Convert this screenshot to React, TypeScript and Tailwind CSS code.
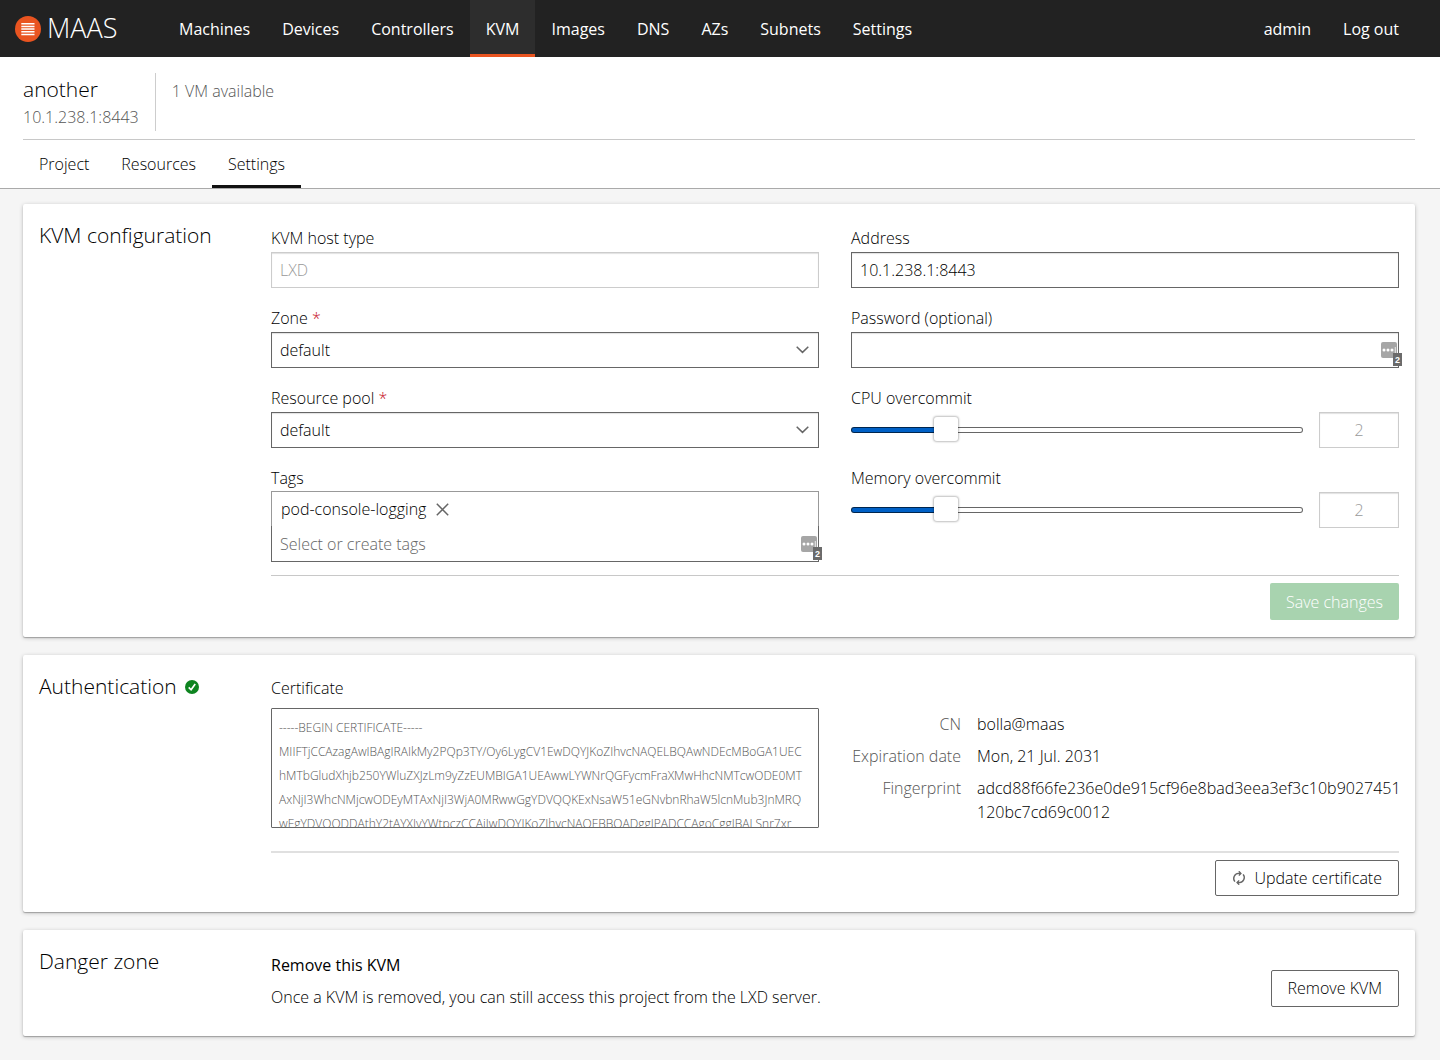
import React, { useId, useState } from 'react';

const navLinks = ['Machines', 'Devices', 'Controllers', 'KVM', 'Images', 'DNS', 'AZs', 'Subnets', 'Settings'];
const tabs = ['Project', 'Resources', 'Settings'];

const certificate = `-----BEGIN CERTIFICATE-----
MIIFTjCCAzagAwIBAgIRAIkMy2PQp3TY/Oy6LygCV1EwDQYJKoZIhvcNAQELBQAwNDEcMBoGA1UEC
hMTbGludXhjb250YWluZXJzLm9yZzEUMBIGA1UEAwwLYWNrQGFycmFraXMwHhcNMTcwODE0MT
AxNjI3WhcNMjcwODEyMTAxNjI3WjA0MRwwGgYDVQQKExNsaW51eGNvbnRhaW5lcnMub3JnMRQ
wEgYDVQQDDAthY2tAYXJyYWtpczCCAiIwDQYJKoZIhvcNAQEBBQADggIPADCCAgoCggIBALSnr7xr`;

const fieldClass =
  'block h-9 w-full rounded-none border border-[#666] bg-white px-2 text-black shadow-[inset_0_1px_1px_rgba(0,0,0,0.12)] outline-none disabled:border-[#ccc] disabled:text-[#999]';

const Logo = () => (
  <svg width="26" height="26" viewBox="0 0 26 26" aria-hidden="true">
    <circle cx="13" cy="13" r="13" fill="#e95420" />
    <path d="M6.3 7.7h13.2M6.3 10.4h13.2M6.3 13.1h13.2M6.3 15.8h13.2M6.3 18.5h13.2" stroke="#fff" strokeWidth="1.5" />
  </svg>
);

const PasswordManagerBadge = () => (
  <svg className="pointer-events-none absolute -right-[3px] bottom-0 z-10" width="22" height="26" viewBox="0 0 22 26" aria-hidden="true">
    <rect x="1" y="0" width="16" height="16" rx="2" fill="#a6a6a6" />
    <circle cx="4" cy="8" r="1.5" fill="#fff" />
    <circle cx="8" cy="8" r="1.5" fill="#fff" />
    <circle cx="12" cy="8" r="1.5" fill="#fff" />
    <path d="M15.3 5v6" stroke="#fff" strokeWidth="0.8" />
    <rect x="13" y="11" width="9" height="13" fill="#6b6b6b" />
    <text x="17.5" y="21" fill="#fff" fontSize="9" fontWeight="700" textAnchor="middle" fontFamily="Liberation Sans, sans-serif">2</text>
  </svg>
);

interface FieldProps {
  label: string;
  required?: boolean;
  children: (id: string) => React.ReactNode;
}

const Field: React.FC<FieldProps> = ({ label, required, children }) => {
  const id = useId();
  return (
    <div className="h-20">
      <label htmlFor={id} className="mb-[2px] block leading-6">
        {label}
        {required && <span className="text-[#c7162b]"> *</span>}
      </label>
      {children(id)}
    </div>
  );
};

const SelectField: React.FC<{ label: string }> = ({ label }) => (
  <Field label={label} required>
    {(id) => (
      <div className="relative">
        <select id={id} className={`${fieldClass} appearance-none`} defaultValue="default">
          <option>default</option>
        </select>
        <svg className="pointer-events-none absolute top-[14px] right-[10px]" width="13" height="8" viewBox="0 0 13 8" fill="none" aria-hidden="true">
          <path d="M0.7 0.8 6.5 6.4 12.3 0.8" stroke="#666" strokeWidth="1.5" />
        </svg>
      </div>
    )}
  </Field>
);

const OvercommitField: React.FC<{ label: string }> = ({ label }) => {
  const [value, setValue] = useState(2);
  const fill = { '--fill': `${((value - 0.1) / 9.9) * 100}%` } as React.CSSProperties;
  return (
    <Field label={label}>
      {(id) => (
        <div className="flex items-center gap-4">
          <input
            id={id}
            type="range"
            min={0.1}
            max={10}
            step={0.1}
            value={value}
            onChange={(e) => setValue(Number(e.target.value))}
            style={fill}
            className="h-9 min-w-0 flex-1 appearance-none bg-transparent [&::-webkit-slider-runnable-track]:h-[6px] [&::-webkit-slider-runnable-track]:rounded-full [&::-webkit-slider-runnable-track]:border [&::-webkit-slider-runnable-track]:border-black/60 [&::-webkit-slider-runnable-track]:bg-[linear-gradient(to_right,#0060c6_var(--fill),#fff_var(--fill))] [&::-webkit-slider-runnable-track]:bg-origin-border [&::-webkit-slider-thumb]:-mt-[11px] [&::-webkit-slider-thumb]:size-6 [&::-webkit-slider-thumb]:appearance-none [&::-webkit-slider-thumb]:rounded-[3px] [&::-webkit-slider-thumb]:bg-white [&::-webkit-slider-thumb]:shadow-[0_0_2px_1px_rgba(0,0,0,0.25)]"
          />
          <div className="w-20">
            <input aria-label={`${label} value`} disabled value={value} readOnly className={`${fieldClass} text-center`} />
          </div>
        </div>
      )}
    </Field>
  );
};

const Card: React.FC<{ title: React.ReactNode; className?: string; children: React.ReactNode }> = ({ title, className = '', children }) => (
  <section className={`grid grid-cols-12 gap-x-8 rounded-[2px] bg-white px-4 pt-4 shadow-[0_1px_1px_rgba(0,0,0,0.25),0_1px_4px_rgba(0,0,0,0.22)] ${className}`}>
    <h2 className="col-span-2 flex h-8 items-center gap-2 text-[21px] whitespace-nowrap">{title}</h2>
    {children}
  </section>
);

export default function App() {
  const [tags, setTags] = useState(['pod-console-logging']);

  return (
    <div className="min-h-screen bg-[#f5f5f5] pb-6 font-['Open_Sans',sans-serif] text-base font-light text-black">
      <header className="flex h-[57px] bg-[#222] pr-[25px] text-white">
        <a href="#" className="flex w-[163px] items-center gap-[6px] pl-[15px] text-[27px]">
          <Logo />
          MAAS
        </a>
        <nav className="flex flex-1 font-normal">
          {navLinks.map((name) => (
            <a
              key={name}
              href="#"
              className={`flex items-center border-b-[3px] px-4 pt-1 ${name === 'KVM' ? 'border-[#e95420] bg-[#2d2d2d]' : 'border-transparent'}`}
            >
              {name}
            </a>
          ))}
          <a href="#" className="ml-auto flex items-center px-4 pt-px">admin</a>
          <a href="#" className="flex items-center px-4 pt-px">Log out</a>
        </nav>
      </header>

      <div className="border-b border-[#aaa] bg-white pr-[25px] pl-[23px]">
        <div className="flex border-b border-[#c8c8c8] pt-4 pb-2">
          <div className="h-[58px] border-r border-[#cdcdcd] pr-4">
            <h1 className="text-[21px] leading-8">another</h1>
            <p className="leading-6 text-[#555]">10.1.238.1:8443</p>
          </div>
          <p className="pt-[6px] pl-4 leading-6 text-[#555]">1 VM available</p>
        </div>
        <nav className="flex">
          {tabs.map((name) => (
            <a
              key={name}
              href="#"
              className={`border-b-[3px] px-4 pt-3 pb-[9px] leading-6 ${name === 'Settings' ? 'border-[#111]' : 'border-transparent'}`}
            >
              {name}
            </a>
          ))}
        </nav>
      </div>

      <main className="flex flex-col gap-[18px] pt-[15px] pr-[25px] pl-[23px]">
        <Card title="KVM configuration" className="pb-[17px]">
          <form className="col-span-10 grid grid-cols-2 gap-x-8 pt-[6px]" onSubmit={(e) => e.preventDefault()}>
            <div>
              <Field label="KVM host type">{(id) => <input id={id} disabled defaultValue="LXD" className={fieldClass} />}</Field>
              <SelectField label="Zone" />
              <SelectField label="Resource pool" />
              <label htmlFor="tags" className="mb-px block leading-6">Tags</label>
              <div className="relative">
                <div className="flex h-[35px] items-center gap-[10px] border border-b-0 border-[#999] bg-white px-[9px]">
                  {tags.map((tag) => (
                    <React.Fragment key={tag}>
                      <span>{tag}</span>
                      <button type="button" aria-label={`Remove ${tag}`} onClick={() => setTags(tags.filter((t) => t !== tag))}>
                        <svg width="13" height="13" viewBox="0 0 13 13" aria-hidden="true">
                          <path d="M0.8 0.8 12.2 12.2M12.2 0.8 0.8 12.2" stroke="#666" strokeWidth="1.5" />
                        </svg>
                      </button>
                    </React.Fragment>
                  ))}
                </div>
                <input
                  id="tags"
                  placeholder="Select or create tags"
                  className="block h-9 w-full border border-t-0 border-[#666] px-2 outline-none placeholder:text-[#666]"
                />
                <PasswordManagerBadge />
              </div>
            </div>
            <div>
              <Field label="Address">{(id) => <input id={id} defaultValue="10.1.238.1:8443" className={fieldClass} />}</Field>
              <Field label="Password (optional)">
                {(id) => (
                  <div className="relative">
                    <input id={id} type="password" className={fieldClass} />
                    <PasswordManagerBadge />
                  </div>
                )}
              </Field>
              <OvercommitField label="CPU overcommit" />
              <OvercommitField label="Memory overcommit" />
            </div>
            <div className="col-span-2 mt-[13px] flex justify-end border-t border-[#c8c8c8] pt-[7px]">
              <button type="submit" disabled className="h-[37px] rounded-[2px] bg-[#a8d3af] px-4 text-white">
                Save changes
              </button>
            </div>
          </form>
        </Card>

        <Card
          title={
            <>
              Authentication
              <svg width="14" height="14" viewBox="0 0 14 14" fill="none" role="img" aria-label="Authenticated">
                <circle cx="7" cy="7" r="7" fill="#0e8420" />
                <path d="M3.7 7.4 6.1 9.8 10.2 4.1" stroke="#fff" strokeWidth="1.7" />
              </svg>
            </>
          }
          className="pb-4"
        >
          <div className="col-span-10 grid grid-cols-2 gap-x-8 pt-[5px]">
            <div>
              <label htmlFor="certificate" className="mb-2 block leading-6">Certificate</label>
              <textarea
                id="certificate"
                readOnly
                value={certificate}
                className="block h-[120px] w-full resize-none overflow-hidden rounded-[1px] border border-[#666] px-[7px] py-[7px] text-xs leading-6 whitespace-pre text-[#555] outline-none"
              />
            </div>
            <dl className="grid grid-cols-[110px_minmax(0,1fr)] content-start gap-x-4 gap-y-2 pt-9 leading-6">
              <dt className="text-right text-[#555]">CN</dt>
              <dd>bolla@maas</dd>
              <dt className="text-right whitespace-nowrap text-[#555]">Expiration date</dt>
              <dd>Mon, 21 Jul. 2031</dd>
              <dt className="text-right text-[#555]">Fingerprint</dt>
              <dd>
                adcd88f66fe236e0de915cf96e8bad3eea3ef3c10b9027451
                <br />
                120bc7cd69c0012
              </dd>
            </dl>
            <div className="col-span-2 mt-[23px] flex justify-end border-t-2 border-[#e0e0e0] pt-[7px]">
              <button type="button" className="flex h-9 items-center gap-2 rounded-[2px] border border-[#666] px-4">
                <svg width="14" height="14" viewBox="0 0 14 14" fill="none" stroke="#666" strokeWidth="1.4" aria-hidden="true">
                  <path d="M2.9 10.6A5 5 0 0 1 6.4 2.4H8.6M11.1 3.4A5 5 0 0 1 7.6 11.6H5.4" />
                  <path d="M6.8 0.3 8.9 2.4 6.8 4.5M7.2 9.5 5.1 11.6 7.2 13.7" />
                </svg>
                Update certificate
              </button>
            </div>
          </div>
        </Card>

        <Card title="Danger zone" className="pb-[27px]">
          <div className="col-span-10 flex items-center justify-between pt-[7px]">
            <div className="leading-6">
              <h3 className="mb-2 font-medium">Remove this KVM</h3>
              <p>Once a KVM is removed, you can still access this project from the LXD server.</p>
            </div>
            <button type="button" className="mt-[14px] h-[37px] rounded-[2px] border border-[#666] px-4">
              Remove KVM
            </button>
          </div>
        </Card>
      </main>
    </div>
  );
}
